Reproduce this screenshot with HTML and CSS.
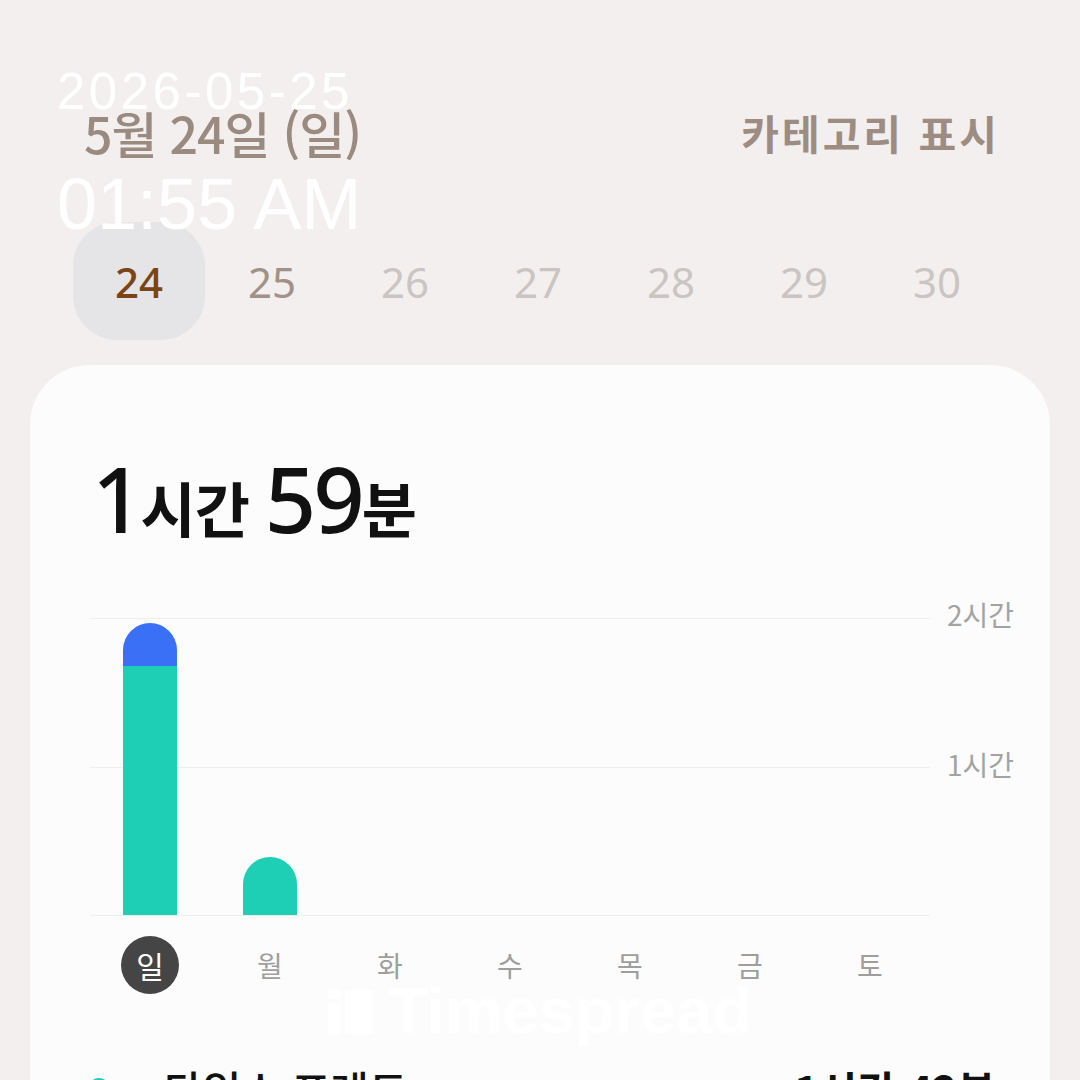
FILE: index.html
```
<!DOCTYPE html>
<html lang="ko">

<head>
    <meta charset="UTF-8">
    <meta name="viewport" content="width=device-width, initial-scale=1.0">
    <title>Timespread</title>
    <link rel="stylesheet" href="styles.css">
</head>

<body>
    <div class="stamp">
        <div class="stamp-date">2026-05-25</div>
        <div class="stamp-time">01:55 AM</div>
    </div>

    <div class="header">
        <div class="today">5월 24일 (일)</div>
        <div class="category">카테고리 표시</div>
    </div>

    <div class="dates">
        <div class="date selected">24</div>
        <div class="date near">25</div>
        <div class="date">26</div>
        <div class="date">27</div>
        <div class="date">28</div>
        <div class="date">29</div>
        <div class="date">30</div>
    </div>

    <div class="card">
        <div class="total"><span class="num">1</span>시간 <span class="num">59</span>분</div>

        <div class="chart">
            <div class="plot">
                <div class="grid-mid"></div>
                <div class="col">
                    <div class="bar">
                        <div class="seg blue" style="height: 43px"></div>
                        <div class="seg teal" style="height: 249px"></div>
                    </div>
                </div>
                <div class="col">
                    <div class="bar">
                        <div class="seg teal" style="height: 58px"></div>
                    </div>
                </div>
                <div class="col"></div>
                <div class="col"></div>
                <div class="col"></div>
                <div class="col"></div>
                <div class="col"></div>
            </div>
            <div class="axis">
                <span>2시간</span>
                <span>1시간</span>
            </div>
        </div>

        <div class="days">
            <div class="day"><span class="day-on">일</span></div>
            <div class="day">월</div>
            <div class="day">화</div>
            <div class="day">수</div>
            <div class="day">목</div>
            <div class="day">금</div>
            <div class="day">토</div>
        </div>

        <div class="watermark">
            <svg width="46" height="48" viewBox="0 0 46 48">
                <rect x="0" y="4" width="13" height="9" fill="#fff"/>
                <rect x="0" y="17" width="13" height="31" fill="#fff"/>
                <rect x="17" y="4" width="29" height="44" fill="#fff"/>
            </svg>
            <span>Timespread</span>
        </div>

        <div class="legend">
            <span class="dot"></span>
            <span class="legend-name">타임스 프레드</span>
            <span class="legend-time">1시간 42분</span>
        </div>
    </div>
</body>

</html>
```

FILE: styles.css
```
body {
    margin: 0;
    height: 1080px;
    overflow: hidden;
    background: #f3efee;
    font-family: "Noto Sans CJK KR", "Noto Sans", sans-serif;
    position: relative;
}

.stamp {
    position: absolute;
    left: 57px;
    top: 62px;
    color: #fff;
    font-family: "Liberation Sans", sans-serif;
    z-index: 5;
}

.stamp-date {
    font-size: 51px;
    line-height: 60px;
    letter-spacing: 3.5px;
}

.stamp-time {
    font-size: 72px;
    line-height: 84px;
    margin-top: 40px;
}

.header {
    display: flex;
    justify-content: space-between;
    align-items: center;
    padding: 97px 80px 0 84px;
    height: 70px;
}

.today {
    font-size: 50px;
    font-weight: 500;
    color: #9a8a80;
    letter-spacing: -1px;
}

.category {
    font-size: 41px;
    font-weight: 700;
    color: #9d8c82;
    letter-spacing: 3px;
}

.dates {
    display: flex;
    margin: 55px 0 0 73px;
}

.date {
    width: 132px;
    height: 118px;
    display: flex;
    align-items: center;
    justify-content: center;
    font-family: "Noto Sans", sans-serif;
    font-size: 42px;
    color: #cac5c3;
    margin-right: 1px;
}

.date.near {
    color: #a09189;
}

.date.selected {
    background: #e5e4e6;
    border-radius: 44px;
    color: #7a4516;
    font-weight: 500;
}

.card {
    margin: 25px 30px 0;
    background: #fcfcfc;
    border-radius: 60px;
    padding: 83px 0 0 0;
    height: 800px;
}

.total {
    padding-left: 62px;
    font-size: 60px;
    font-weight: 700;
    color: #111;
    line-height: 100px;
    letter-spacing: -1px;
}

.total .num {
    font-family: "Noto Sans", sans-serif;
    font-weight: 500;
    font-size: 90px;
    letter-spacing: -3px;
}

.chart {
    display: flex;
    margin-top: 61px;
    padding-left: 60px;
}

.plot {
    position: relative;
    width: 840px;
    height: 296px;
    border-top: 1px solid #eeeeee;
    border-bottom: 1px solid #eeeeee;
    display: flex;
    align-items: flex-end;
}

.grid-mid {
    position: absolute;
    left: 0;
    right: 0;
    top: 148px;
    border-top: 1px solid #eeeeee;
}

.col {
    width: 120px;
    display: flex;
    justify-content: center;
}

.bar {
    width: 54px;
    border-radius: 27px 27px 0 0;
    overflow: hidden;
    display: flex;
    flex-direction: column;
    position: relative;
    z-index: 1;
}

.seg.blue {
    background: #3a70f6;
}

.seg.teal {
    background: #1ecfb6;
}

.axis {
    display: flex;
    flex-direction: column;
    justify-content: space-between;
    align-items: flex-end;
    width: 84px;
    height: 190px;
    margin-top: -24px;
    font-size: 28px;
    color: #a3a3a3;
}

.days {
    display: flex;
    padding-left: 60px;
    margin-top: 20px;
}

.day {
    width: 120px;
    height: 58px;
    display: flex;
    align-items: center;
    justify-content: center;
    font-size: 28px;
    color: #9e9e9e;
}

.day-on {
    width: 58px;
    height: 58px;
    border-radius: 50%;
    background: #454545;
    color: #fff;
    display: flex;
    align-items: center;
    justify-content: center;
    font-size: 30px;
}

.watermark {
    display: flex;
    align-items: center;
    justify-content: center;
    gap: 14px;
    margin: -14px 0 0 0;
    height: 60px;
    font-family: "Liberation Sans", sans-serif;
    font-weight: 700;
    font-size: 65px;
    color: #fff;
}

.legend {
    display: flex;
    align-items: center;
    padding: 18px 54px 0 58px;
    font-size: 42px;
    font-weight: 700;
    color: #111;
}

.dot {
    width: 22px;
    height: 22px;
    border-radius: 50%;
    background: #1ecfb6;
    margin-right: 54px;
}

.legend-name {
    flex: 1;
    font-weight: 500;
}
```
